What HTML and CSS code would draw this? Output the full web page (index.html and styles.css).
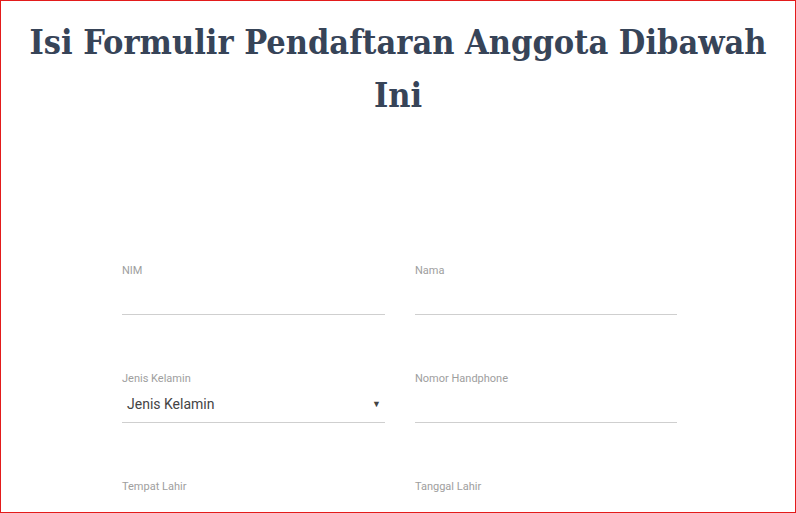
FILE: index.html
```html
<!DOCTYPE html>
<html lang="id">
<head>
<meta charset="utf-8">
<title>Formulir Pendaftaran Anggota</title>
<link rel="stylesheet" href="styles.css">
</head>
<body>
<div class="frame">
  <h1 class="title">Isi Formulir Pendaftaran Anggota Dibawah Ini</h1>
  <form class="form">
    <div class="field">
      <label class="label">NIM</label>
      <div class="input"></div>
    </div>
    <div class="field">
      <label class="label">Nama</label>
      <div class="input"></div>
    </div>
    <div class="field">
      <label class="label">Jenis Kelamin</label>
      <div class="input select"><span>Jenis Kelamin</span><span class="caret">▼</span></div>
    </div>
    <div class="field">
      <label class="label">Nomor Handphone</label>
      <div class="input"></div>
    </div>
    <div class="field">
      <label class="label">Tempat Lahir</label>
      <div class="input"></div>
    </div>
    <div class="field">
      <label class="label">Tanggal Lahir</label>
      <div class="input"></div>
    </div>
  </form>
</div>
</body>
</html>
```
FILE: styles.css
```css
* { box-sizing: border-box; }
html, body { margin: 0; padding: 0; background: #fff; }
.frame {
  height: 513px;
  border: 1px solid #e31b1b;
  overflow: hidden;
  font-family: Roboto, "Liberation Sans", sans-serif;
}
.title {
  font-family: "DejaVu Serif Condensed", "DejaVu Serif", serif;
  font-stretch: condensed;
  font-weight: bold;
  font-size: 34px;
  line-height: 53px;
  color: #374458;
  text-align: center;
  width: 770px;
  margin: 15px auto 0;
}
.form {
  display: grid;
  grid-template-columns: 263px 262px;
  column-gap: 30px;
  row-gap: 57px;
  width: 555px;
  margin: 142px 0 0 121px;
}
.label {
  display: block;
  font-size: 11px;
  line-height: 14px;
  color: #9e9e9e;
}
.input {
  height: 37px;
  border-bottom: 1px solid #cfcfcf;
}
.select {
  display: flex;
  align-items: center;
  justify-content: space-between;
  padding: 0 4px 0 5px;
  font-size: 14px;
  color: #444;
}
.caret {
  font-size: 9px;
  color: #444;
}
```
